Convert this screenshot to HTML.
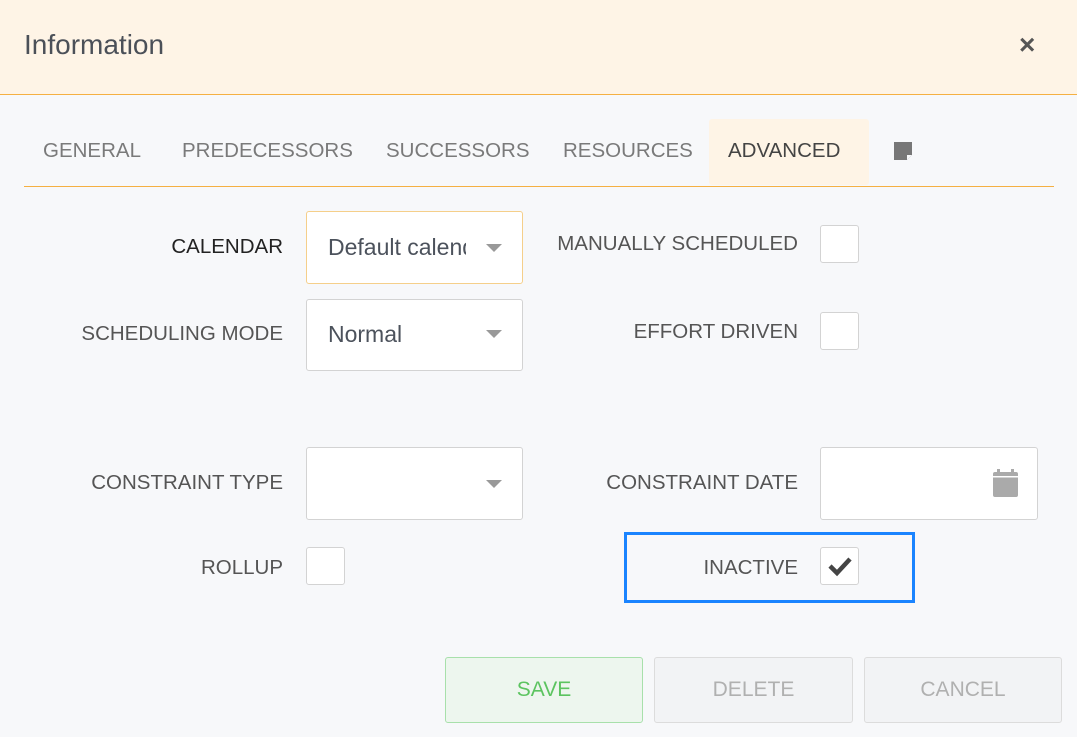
<!DOCTYPE html>
<html><head><style>
*{margin:0;padding:0;box-sizing:border-box}
body{width:1077px;height:737px;overflow:hidden;background:#f7f8fa;font-family:"Liberation Sans",sans-serif;position:relative}
.a{position:absolute}
.hdr{left:0;top:0;width:1077px;height:95px;background:#fef4e6;border-bottom:1px solid #f5b042}
.tab{top:139px;font-size:20.5px;color:#7a7a7a;line-height:24px}
.lbl{font-size:20.5px;color:#555;line-height:24px;text-align:right;white-space:nowrap}
.box{background:#fff;border:1px solid #d3d3d3;border-radius:3px}
.cb{width:39px;height:38px}
.arr{width:0;height:0;border-left:8px solid transparent;border-right:8px solid transparent;border-top:8px solid #999}
.val{font-size:23px;color:#4c525c;line-height:28px}
.btn{top:657px;height:66px;border:1px solid #dcdcdc;border-radius:3px;background:#f2f3f5;font-size:21px;color:#b0b0b0;text-align:center;line-height:64px}
</style></head><body>
<div class="a hdr"></div>
<div class="a" style="left:24px;top:29px;font-size:28px;color:#4b5058">Information</div>
<div class="a" style="left:1019px;top:29px;font-size:28px;color:#555;font-weight:bold">×</div>

<div class="a" style="left:709px;top:119px;width:160px;height:66px;background:#fef4e6;border-radius:3px"></div>
<div class="a" style="left:24px;top:186px;width:1030px;height:1px;background:#f5b042"></div>
<div class="a tab" style="left:43px">GENERAL</div>
<div class="a tab" style="left:182px">PREDECESSORS</div>
<div class="a tab" style="left:386px">SUCCESSORS</div>
<div class="a tab" style="left:563px">RESOURCES</div>
<div class="a tab" style="left:728px;color:#444">ADVANCED</div>
<svg class="a" style="left:893px;top:141px" width="20" height="20"><path d="M1 1h18v13l-5 5H1z" fill="#777"/><path d="M14 19v-5h5" fill="#f7f8fa"/></svg>

<div class="a lbl" style="right:794px;top:235px;color:#222">CALENDAR</div>
<div class="a box" style="left:306px;top:211px;width:217px;height:73px;border-color:#f5cf8a"></div>
<div class="a val" style="left:328px;top:233px;width:138px;overflow:hidden;white-space:nowrap">Default calendar</div>
<div class="a arr" style="left:486px;top:244px"></div>

<div class="a lbl" style="right:794px;top:322px">SCHEDULING MODE</div>
<div class="a box" style="left:306px;top:299px;width:217px;height:72px"></div>
<div class="a val" style="left:328px;top:320px">Normal</div>
<div class="a arr" style="left:486px;top:330px"></div>

<div class="a lbl" style="right:279px;top:232px">MANUALLY SCHEDULED</div>
<div class="a box cb" style="left:820px;top:225px"></div>
<div class="a lbl" style="right:279px;top:320px">EFFORT DRIVEN</div>
<div class="a box cb" style="left:820px;top:312px"></div>

<div class="a lbl" style="right:794px;top:471px">CONSTRAINT TYPE</div>
<div class="a box" style="left:306px;top:447px;width:217px;height:73px"></div>
<div class="a arr" style="left:486px;top:480px"></div>

<div class="a lbl" style="right:279px;top:471px">CONSTRAINT DATE</div>
<div class="a box" style="left:820px;top:447px;width:218px;height:73px"></div>
<svg class="a" style="left:992px;top:469px" width="27" height="29"><rect x="1" y="3" width="25" height="25" rx="2" fill="#aaa"/><rect x="5" y="0" width="3" height="6" fill="#aaa"/><rect x="19" y="0" width="3" height="6" fill="#aaa"/><rect x="1" y="7" width="25" height="1.5" fill="#fff"/></svg>

<div class="a lbl" style="right:794px;top:556px">ROLLUP</div>
<div class="a box cb" style="left:306px;top:547px"></div>

<div class="a" style="left:624px;top:532px;width:291px;height:71px;border:3px solid #1a84ff"></div>
<div class="a lbl" style="right:279px;top:556px">INACTIVE</div>
<div class="a box cb" style="left:820px;top:547px"></div>
<svg class="a" style="left:827px;top:555px" width="26" height="22"><path d="M3 11l7 7L23 4" fill="none" stroke="#444" stroke-width="4.5"/></svg>

<div class="a btn" style="left:445px;width:198px;background:#edf6ee;border-color:#a8e0ab;color:#5cc460">SAVE</div>
<div class="a btn" style="left:654px;width:199px">DELETE</div>
<div class="a btn" style="left:864px;width:198px">CANCEL</div>
</body></html>
